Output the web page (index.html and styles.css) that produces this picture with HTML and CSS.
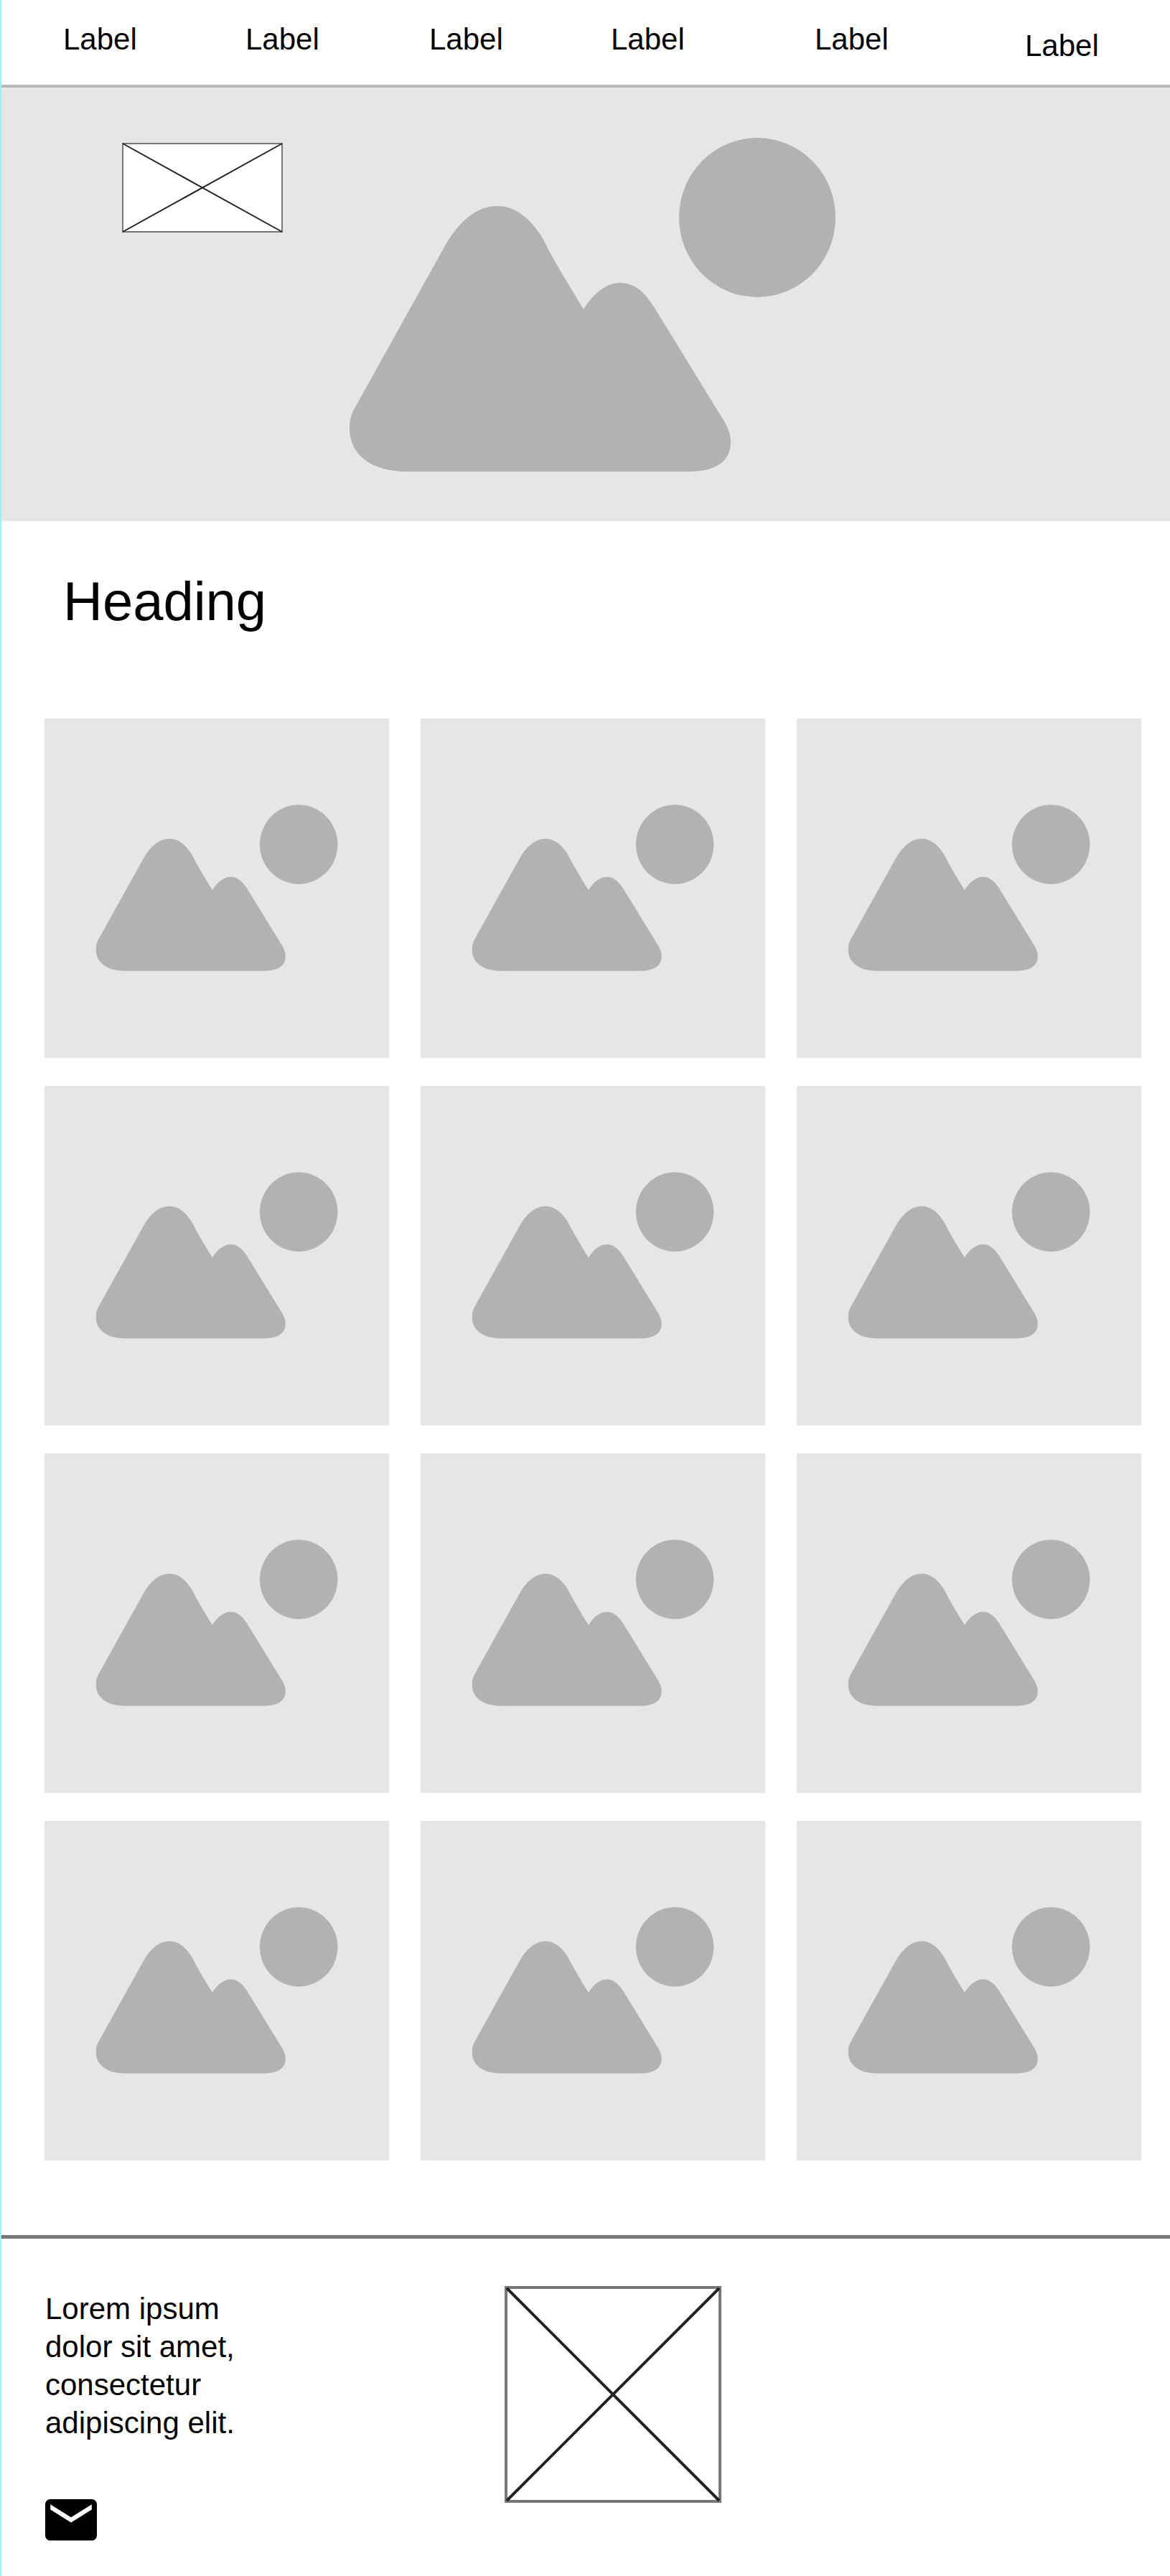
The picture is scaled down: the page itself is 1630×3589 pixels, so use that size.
FILE: index.html
```html
<!DOCTYPE html>
<html lang="en">
<head>
<meta charset="utf-8">
<meta name="viewport" content="width=device-width, initial-scale=1">
<title>Heading</title>
<link rel="stylesheet" href="styles.css">
</head>
<body>
<svg class="defs" aria-hidden="true">
  <symbol id="scene" viewBox="343 -50 965 951">
    <ellipse cx="1055" cy="303" rx="109" ry="111"/>
    <path d="M567 657C515 657 487 632 487 597C487 586 489 577 495 567L618 346C640 306 666 287 693 287C716 287 738 302 756 332C774 368 792 396 813 431C828 407 846 394 864 394C886 394 901 410 915 434L1004 579C1013 592 1018 604 1018 616C1018 643 997 657 958 657Z"/>
  </symbol>
</svg>
<div class="page">
  <nav class="nav">
    <a href="#">Label</a>
    <a href="#">Label</a>
    <a href="#">Label</a>
    <a href="#">Label</a>
    <a href="#">Label</a>
    <a href="#">Label</a>
  </nav>
  <header class="hero">
    <svg class="hero-art" viewBox="2 122 1628 604" aria-hidden="true"><use href="#scene" x="343" y="-50" width="965" height="951"/></svg>
    <svg class="hero-logo" viewBox="0 0 224 125" role="img" aria-label="Logo">
      <rect class="box" x="1" y="1" width="222" height="123"/>
      <path class="cross" d="M1 1L223 124M223 1L1 124"/>
    </svg>
  </header>
  <main>
    <h1 class="title">Heading</h1>
    <div class="gallery">
      <svg class="tile" viewBox="0 0 480 473"><use href="#scene"/></svg>
      <svg class="tile" viewBox="0 0 480 473"><use href="#scene"/></svg>
      <svg class="tile" viewBox="0 0 480 473"><use href="#scene"/></svg>
      <svg class="tile" viewBox="0 0 480 473"><use href="#scene"/></svg>
      <svg class="tile" viewBox="0 0 480 473"><use href="#scene"/></svg>
      <svg class="tile" viewBox="0 0 480 473"><use href="#scene"/></svg>
      <svg class="tile" viewBox="0 0 480 473"><use href="#scene"/></svg>
      <svg class="tile" viewBox="0 0 480 473"><use href="#scene"/></svg>
      <svg class="tile" viewBox="0 0 480 473"><use href="#scene"/></svg>
      <svg class="tile" viewBox="0 0 480 473"><use href="#scene"/></svg>
      <svg class="tile" viewBox="0 0 480 473"><use href="#scene"/></svg>
      <svg class="tile" viewBox="0 0 480 473"><use href="#scene"/></svg>
    </div>
  </main>
  <footer class="footer">
    <div class="contact">
      <p class="blurb">Lorem ipsum dolor sit amet, consectetur adipiscing elit.</p>
      <a class="mail" href="#" aria-label="Email">
        <svg viewBox="2 4 20 16" aria-hidden="true"><path d="M20 4H4c-1.100 0-2 .9-2 2v12c0 1.100.9 2 2 2h16c1.100 0 2-.9 2-2V6c0-1.100-.9-2-2-2zm0 4l-8 5-8-5V6l8 5 8-5v2z"/></svg>
      </a>
    </div>
    <svg class="footer-logo" viewBox="0 0 302 302" role="img" aria-label="Logo">
      <rect class="box" x="2" y="2" width="298" height="298"/>
      <path class="cross" d="M3 3L299 299M299 3L3 299"/>
    </svg>
  </footer>
</div>
</body>
</html>
```
FILE: styles.css
```css
* {
  box-sizing: border-box;
}

body {
  margin: 0;
  background: #fff;
  color: #000;
  font-family: "Liberation Sans", Arial, sans-serif;
  font-size: 42px;
}

.defs {
  display: none;
}

.page {
  border-left: 2px solid #8ff5f5;
}

.nav {
  display: grid;
  grid-template-columns: 254fr 256fr 253fr 284fr 293fr 202fr;
  align-items: start;
  min-height: 122px;
  padding: 31px 0 30px 86px;
  border-bottom: 4px solid #b9b9b9;
  line-height: 48px;
}

.nav a {
  color: inherit;
  text-decoration: none;
}

.nav a:last-child {
  align-self: end;
}

.hero {
  position: relative;
  background: #e6e6e6;
  fill: #b2b2b2;
}

.hero-art {
  display: block;
  width: 100%;
}

.hero-logo {
  position: absolute;
  top: 77px;
  left: 168px;
  width: 224px;
}

.box {
  fill: #fff;
  stroke: #777;
  stroke-width: 2px;
}

.cross {
  fill: none;
  stroke: #222;
  stroke-width: 2px;
}

.title {
  margin: 0;
  padding: 67px 40px 118px 86px;
  font-size: 76px;
  font-weight: 400;
  line-height: 90px;
}

.gallery {
  display: grid;
  grid-template-columns: repeat(3, 1fr);
  gap: 39px 44px;
  padding: 0 40px 104px 60px;
}

.tile {
  display: block;
  width: 100%;
  background: #e6e6e6;
  fill: #b2b2b2;
}

.footer {
  display: grid;
  grid-template-columns: 640px 302px;
  align-items: start;
  padding: 66px 40px 50px 61px;
  border-top: 5px solid #777;
}

.contact {
  display: flex;
  flex-direction: column;
  align-items: flex-start;
  gap: 80px;
  padding-top: 5px;
}

.blurb {
  width: 300px;
  margin: 0;
  line-height: 53px;
}

.mail {
  display: block;
  width: 72px;
  color: #000;
}

.mail svg {
  display: block;
  width: 100%;
  fill: currentColor;
}

.footer-logo {
  display: block;
  width: 100%;
}

.footer-logo .box,
.footer-logo .cross {
  stroke-width: 4px;
}
```
